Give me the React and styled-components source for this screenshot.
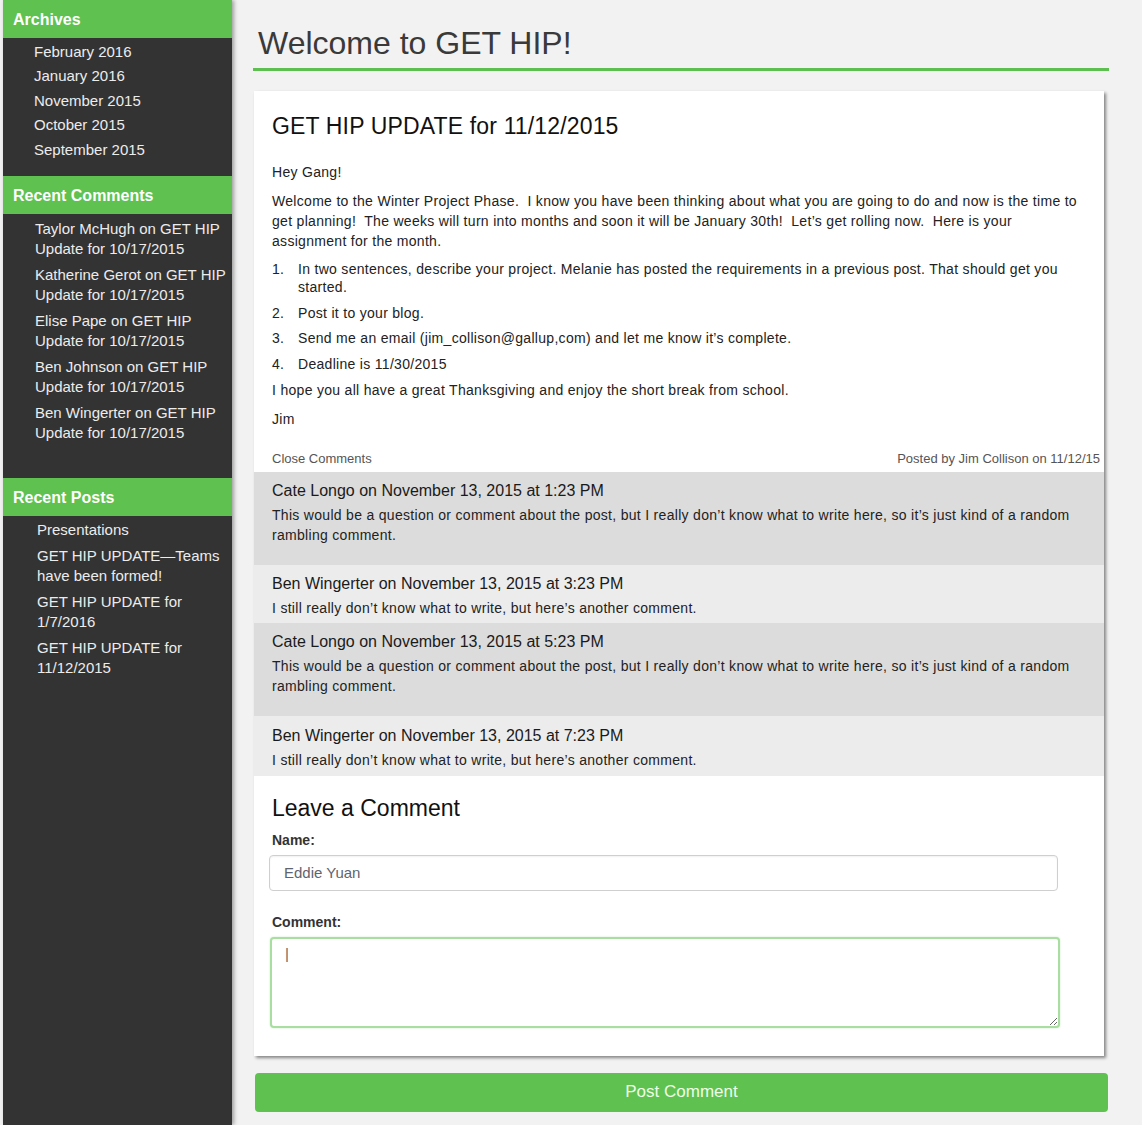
import React from 'react';
import styled, { createGlobalStyle } from 'styled-components';

const GlobalStyle = createGlobalStyle`
    html, body {
        margin: 0;
        padding: 0;
        background: #f2f2f2;
    }
    body {
        font-family: "Liberation Sans", Arial, sans-serif;
        color: #222;
    }
`;

const Page = styled.div`
    display: flex;
    min-height: 100vh;
    padding-left: 3px;
    background: #f2f2f2;
`;

const Sidebar = styled.aside`
    width: 229px;
    flex-shrink: 0;
    background: #333;
    box-shadow: 2px 0 4px rgba(0, 0, 0, 0.35);
`;

const SideHeader = styled.h3`
    margin: 0;
    height: 38px;
    line-height: 39px;
    padding-left: 10px;
    background: #5ec150;
    color: #fff;
    font-size: 16px;
    font-weight: bold;
`;

const SideList = styled.ul`
    list-style: none;
    margin: 0;
    padding: ${(p) => p.$top}px 0 ${(p) => p.$bottom}px ${(p) => p.$indent}px;
    display: flex;
    flex-direction: column;
    gap: ${(p) => p.$gap}px;
`;

const SideItem = styled.li`
    color: #ececec;
    font-size: 15px;
    line-height: 20px;
    white-space: nowrap;
`;

const Main = styled.main`
    width: 856px;
    padding-left: 21px;
    padding-bottom: 13px;
`;

const PageTitle = styled.h1`
    margin: 25px 0 0;
    padding: 0 0 6px 5px;
    font-size: 32px;
    line-height: 37px;
    font-weight: normal;
    color: #3a3a3a;
    border-bottom: 3px solid #5cbf4f;
`;

const Card = styled.article`
    margin: 20px 5px 0 1px;
    background: #fff;
    box-shadow: 2px 2px 3px rgba(0, 0, 0, 0.45);
    padding-bottom: 28px;
`;

const PostBody = styled.div`
    padding: 21px 18px 0;
    font-size: 14px;
    line-height: 20px;
    letter-spacing: 0.3px;
    color: #222;
`;

const PostTitle = styled.h2`
    margin: 0 0 22px;
    font-size: 23px;
    line-height: 28px;
    font-weight: normal;
    letter-spacing: 0.15px;
    color: #111;
`;

const Para = styled.p`
    margin: 0 0 ${(p) => p.$after ?? 9}px;
`;

const Steps = styled.ol`
    margin: 0 0 7px;
    padding: 0;
    list-style: none;
    display: flex;
    flex-direction: column;
    gap: 7.5px;
`;

const Step = styled.li`
    display: flex;
    line-height: 18px;

    span:first-child {
        width: 26px;
        flex-shrink: 0;
    }
`;

const PostFooter = styled.div`
    display: flex;
    justify-content: space-between;
    padding: 22px 4px 5px 18px;
    font-size: 13px;
    line-height: 16px;
    color: #555;
`;

const CommentBand = styled.div`
    background: ${(p) => (p.$dark ? '#dcdcdc' : '#ececec')};
    padding: ${(p) => p.$top}px 18px ${(p) => p.$bottom}px;
`;

const CommentHead = styled.div`
    font-size: 16px;
    line-height: 20px;
    color: #1a1a1a;
    margin-bottom: 4px;
`;

const CommentText = styled.div`
    font-size: 14px;
    line-height: 20px;
    letter-spacing: 0.3px;
    color: #222;
`;

const FormArea = styled.form`
    padding: 18px 18px 0 15px;
    display: flex;
    flex-direction: column;
`;

const FormTitle = styled.h2`
    margin: 0 0 9px 3px;
    font-size: 23px;
    line-height: 28px;
    font-weight: normal;
    color: #111;
`;

const Label = styled.label`
    margin: 0 0 6px 3px;
    font-size: 14px;
    line-height: 18px;
    font-weight: bold;
    color: #333;
`;

const TextInput = styled.input`
    box-sizing: border-box;
    width: 789px;
    height: 36px;
    margin-bottom: 22px;
    padding: 0 14px;
    border: 1px solid #cfcfcf;
    border-radius: 4px;
    box-shadow: inset 0 1px 2px rgba(0, 0, 0, 0.06);
    font-family: inherit;
    font-size: 15px;
    color: #5f6470;
    outline: none;
`;

const TextArea = styled.textarea`
    box-sizing: border-box;
    display: block;
    width: 790px;
    height: 91px;
    margin-left: 1px;
    padding: 6px 13px;
    border: 2px solid #a8dea0;
    border-radius: 4px;
    box-shadow: 0 0 2px rgba(94, 193, 80, 0.35);
    font-family: inherit;
    font-size: 15px;
    outline: none;

    &::placeholder {
        color: #666;
    }
`;

const PostButton = styled.button`
    display: block;
    width: 853px;
    height: 39px;
    margin: 17px 0 0 2px;
    border: none;
    border-radius: 4px;
    background: #5ec150;
    color: #effde6;
    font-family: inherit;
    font-size: 17px;
`;

const archives = ['February 2016', 'January 2016', 'November 2015', 'October 2015', 'September 2015'];

const recentComments = ['Taylor McHugh', 'Katherine Gerot', 'Elise Pape', 'Ben Johnson', 'Ben Wingerter'];

const recentPosts = [
    'Presentations',
    <>GET HIP UPDATE—Teams<br />have been formed!</>,
    <>GET HIP UPDATE for<br />1/7/2016</>,
    <>GET HIP UPDATE for<br />11/12/2015</>,
];

const longText = 'This would be a question or comment about the post, but I really don\u2019t know what to write here, so it\u2019s just kind of a random rambling comment.';
const shortText = 'I still really don\u2019t know what to write, but here\u2019s another comment.';

const comments = [
    { id: 1, who: 'Cate Longo', at: '1:23 PM', text: longText, top: 9, bottom: 20 },
    { id: 2, who: 'Ben Wingerter', at: '3:23 PM', text: shortText, top: 9, bottom: 5 },
    { id: 3, who: 'Cate Longo', at: '5:23 PM', text: longText, top: 9, bottom: 20 },
    { id: 4, who: 'Ben Wingerter', at: '7:23 PM', text: shortText, top: 10, bottom: 6 },
];

const steps = [
    'In two sentences, describe your project.  Melanie has posted the requirements in a previous post.  That should get you started.',
    'Post it to your blog.',
    'Send me an email (jim_collison@gallup,com) and let me know it\u2019s complete.',
    'Deadline is 11/30/2015',
];

export default function App() {
    return (
        <>
            <GlobalStyle />
            <Page>
                <Sidebar>
                    <SideHeader>Archives</SideHeader>
                    <SideList $top={4} $bottom={16} $indent={31} $gap={4.4}>
                        {archives.map((a) => (
                            <SideItem key={a}>{a}</SideItem>
                        ))}
                    </SideList>

                    <SideHeader>Recent Comments</SideHeader>
                    <SideList $top={5} $bottom={35} $indent={32} $gap={6}>
                        {recentComments.map((name) => (
                            <SideItem key={name}>
                                {name} on GET HIP<br />Update for 10/17/2015
                            </SideItem>
                        ))}
                    </SideList>

                    <SideHeader>Recent Posts</SideHeader>
                    <SideList $top={4} $bottom={20} $indent={34} $gap={6}>
                        {recentPosts.map((p, i) => (
                            <SideItem key={i}>{p}</SideItem>
                        ))}
                    </SideList>
                </Sidebar>

                <Main>
                    <PageTitle>Welcome to GET HIP!</PageTitle>
                    <Card>
                        <PostBody>
                            <PostTitle>GET HIP UPDATE for 11/12/2015</PostTitle>
                            <Para>Hey Gang!</Para>
                            <Para>
                                Welcome to the Winter Project Phase.&nbsp; I know you have been thinking about what you are going to do and now is the time to get planning!&nbsp; The weeks will turn into months and soon it will be January 30th!&nbsp; Let’s get rolling now.&nbsp; Here is your assignment for the month.
                            </Para>
                            <Steps>
                                {steps.map((s, i) => (
                                    <Step key={i}>
                                        <span>{i + 1}.</span>
                                        <span>{s}</span>
                                    </Step>
                                ))}
                            </Steps>
                            <Para>I hope you all have a great Thanksgiving and enjoy the short break from school.</Para>
                            <Para $after={0}>Jim</Para>
                        </PostBody>
                        <PostFooter>
                            <span>Close Comments</span>
                            <span>Posted by Jim Collison on 11/12/15</span>
                        </PostFooter>

                        {comments.map((c, i) => (
                            <CommentBand key={c.id} $dark={i % 2 === 0} $top={c.top} $bottom={c.bottom}>
                                <CommentHead>{c.who} on November 13, 2015 at {c.at}</CommentHead>
                                <CommentText>{c.text}</CommentText>
                            </CommentBand>
                        ))}

                        <FormArea onSubmit={(e) => e.preventDefault()}>
                            <FormTitle>Leave a Comment</FormTitle>
                            <Label htmlFor="name">Name:</Label>
                            <TextInput id="name" defaultValue="Eddie Yuan" />
                            <Label htmlFor="comment">Comment:</Label>
                            <TextArea id="comment" placeholder="|" />
                        </FormArea>
                    </Card>
                    <PostButton type="button">Post Comment</PostButton>
                </Main>
            </Page>
        </>
    );
}
